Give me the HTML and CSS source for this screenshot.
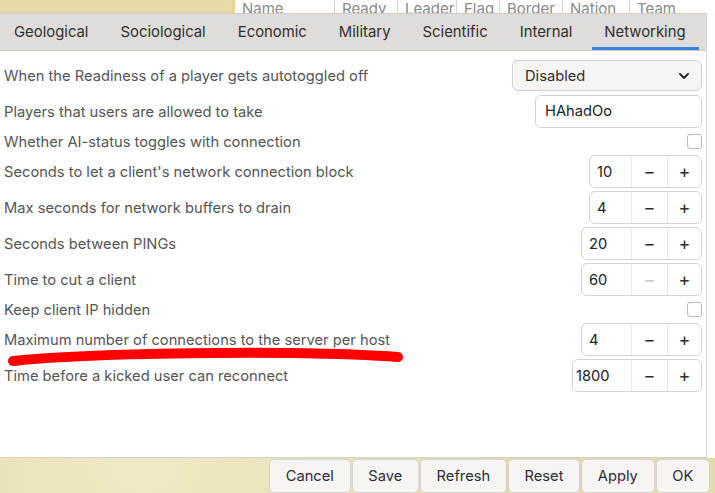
FILE: index.html
```html
<!DOCTYPE html>
<html lang="en">
<head>
    <meta charset="UTF-8">
    <title>Server settings - Networking</title>
    <link rel="stylesheet" href="styles.css">
</head>
<body>
    <div class="topstrip">
        <div class="map-edge"></div>
        <div class="players-head">
            <span class="col col-name">Name</span>
            <span class="col col-ready">Ready</span>
            <span class="col col-leader">Leader</span>
            <span class="col col-flag">Flag</span>
            <span class="col col-border">Border</span>
            <span class="col col-nation">Nation</span>
            <span class="col col-team">Team</span>
        </div>
    </div>

    <div class="main">
        <div class="dialog">
            <div class="tabs">
                <div class="tab">Geological</div>
                <div class="tab">Sociological</div>
                <div class="tab">Economic</div>
                <div class="tab">Military</div>
                <div class="tab">Scientific</div>
                <div class="tab">Internal</div>
                <div class="tab active">Networking</div>
            </div>

            <div class="page">
                <div class="row">
                    <span class="label">When the Readiness of a player gets autotoggled off</span>
                    <div class="dropdown">
                        <span>Disabled</span>
                        <svg class="chevron" width="12" height="8" viewBox="0 0 12 8"><path d="M2 2 L6 6 L10 2" fill="none" stroke="#2e2e2e" stroke-width="2" stroke-linecap="round" stroke-linejoin="round"/></svg>
                    </div>
                </div>
                <div class="row">
                    <span class="label">Players that users are allowed to take</span>
                    <div class="entry">HAhadOo</div>
                </div>
                <div class="row small">
                    <span class="label">Whether AI-status toggles with connection</span>
                    <span class="check"></span>
                </div>
                <div class="row">
                    <span class="label">Seconds to let a client's network connection block</span>
                    <div class="spin">
                        <span class="value w42">10</span>
                        <span class="step">&minus;</span>
                        <span class="step">+</span>
                    </div>
                </div>
                <div class="row">
                    <span class="label">Max seconds for network buffers to drain</span>
                    <div class="spin">
                        <span class="value w42">4</span>
                        <span class="step">&minus;</span>
                        <span class="step">+</span>
                    </div>
                </div>
                <div class="row">
                    <span class="label">Seconds between PINGs</span>
                    <div class="spin">
                        <span class="value w50">20</span>
                        <span class="step">&minus;</span>
                        <span class="step">+</span>
                    </div>
                </div>
                <div class="row">
                    <span class="label">Time to cut a client</span>
                    <div class="spin">
                        <span class="value w50">60</span>
                        <span class="step disabled">&minus;</span>
                        <span class="step">+</span>
                    </div>
                </div>
                <div class="row small">
                    <span class="label">Keep client IP hidden</span>
                    <span class="check"></span>
                </div>
                <div class="row">
                    <span class="label">Maximum number of connections to the server per host</span>
                    <div class="spin">
                        <span class="value w50">4</span>
                        <span class="step">&minus;</span>
                        <span class="step">+</span>
                    </div>
                </div>
                <div class="row">
                    <span class="label">Time before a kicked user can reconnect</span>
                    <div class="spin">
                        <span class="value w59">1800</span>
                        <span class="step">&minus;</span>
                        <span class="step">+</span>
                    </div>
                </div>
            </div>
        </div>
        <div class="behind"></div>
    </div>

    <div class="footer">
        <button class="btn">Cancel</button>
        <button class="btn">Save</button>
        <button class="btn">Refresh</button>
        <button class="btn">Reset</button>
        <button class="btn">Apply</button>
        <button class="btn">OK</button>
    </div>

    <!-- red marker stroke drawn over the screenshot -->
    <svg class="scribble" width="420" height="30" viewBox="0 0 420 30">
        <path d="M13 20 C70 14 180 11 290 12 C350 13 385 15 398 16" fill="none" stroke="#ff0000" stroke-width="10" stroke-linecap="round"/>
    </svg>
</body>
</html>
```

FILE: styles.css
```css
body {
    margin: 0;
    width: 715px;
    height: 493px;
    overflow: hidden;
    position: relative;
    font-family: 'Inter', 'Noto Sans', sans-serif;
    background:
        radial-gradient(ellipse at 20% 95%, #efe9c6 0, rgba(239, 233, 198, 0) 45%),
        radial-gradient(ellipse at 70% 10%, #ede6c0 0, rgba(237, 230, 192, 0) 40%),
        #e4dba8;
}

/* players table peeking out behind the dialog */
.topstrip {
    display: flex;
    height: 13px;
}

.map-edge {
    width: 232px;
    border-right: 3px solid #e8d78a;
}

.players-head {
    flex: 1;
    display: flex;
    background: #fff;
    overflow: hidden;
}

.col {
    padding-left: 7px;
    font-size: 15px;
    line-height: 18px;
    color: #8a8a8a;
    border-right: 1px solid #d6d6d6;
    box-sizing: border-box;
    white-space: nowrap;
    overflow: hidden;
}

.col-name { width: 100px; }
.col-ready { width: 63px; }
.col-leader { width: 59px; }
.col-flag { width: 43px; }
.col-border { width: 63px; }
.col-nation { width: 67px; }
.col-team { flex: 1; border-right: none; }

.main {
    display: flex;
    height: 445px;
}

.dialog {
    width: 707px;
    display: flex;
    flex-direction: column;
    background: #fff;
    border-top: 1px solid #cfcbc6;
    border-right: 1px solid #d8d4cf;
    border-bottom: 1px solid #d2cec9;
    box-sizing: border-box;
}

.behind {
    flex: 1;
    background: #fdfdfc;
}

.tabs {
    display: flex;
    height: 36px;
    background: #dfdcd9;
    border-bottom: 1px solid #cdc9c4;
}

.tab {
    position: relative;
    padding: 0 16px;
    line-height: 36px;
    font-size: 14.87px;
    color: #303030;
}

.tab:first-child {
    padding-left: 14px;
}

.tab.active::after {
    content: "";
    position: absolute;
    left: 4px;
    right: 3px;
    bottom: 0;
    height: 3px;
    background: #3584e4;
}

.page {
    flex: 1;
    padding: 8px 4px 0 4px;
    display: flex;
    flex-direction: column;
    gap: 3px;
}

.row {
    display: flex;
    align-items: center;
    justify-content: space-between;
    height: 33px;
}

.row.small {
    height: 21px;
}

.label {
    font-size: 14.7px;
    color: #555;
}

.dropdown {
    width: 190px;
    height: 31px;
    box-sizing: border-box;
    display: flex;
    align-items: center;
    justify-content: space-between;
    padding: 0 11px 0 12px;
    background: #f6f5f4;
    border: 1px solid #d3cfca;
    border-radius: 6px;
    font-size: 14.7px;
    color: #2e2e2e;
}

.entry {
    width: 167px;
    height: 33px;
    box-sizing: border-box;
    padding: 0 9px;
    line-height: 31px;
    border: 1px solid #d6d2cd;
    border-radius: 6px;
    font-size: 14.7px;
    color: #222;
}

.check {
    width: 15px;
    height: 15px;
    box-sizing: border-box;
    border: 1px solid #bdb9b4;
    border-radius: 3px;
    background: #fff;
}

.spin {
    display: flex;
    height: 33px;
    box-sizing: border-box;
    border: 1px solid #d6d2cd;
    border-radius: 6px;
    font-size: 14.7px;
    color: #222;
}

.value {
    line-height: 32px;
    padding-left: 7px;
    box-sizing: border-box;
}

.w42 { width: 41px; }
.w50 { width: 49px; }
.w59 { width: 58px; padding-left: 3px; }

.step {
    width: 35px;
    line-height: 31px;
    text-align: center;
    border-left: 1px solid #ebe9e6;
    font-size: 18px;
    color: #2e2e2e;
}

.step:last-child {
    width: 33px;
}

.step.disabled {
    color: #c8c8c8;
}

.footer {
    display: flex;
    justify-content: flex-end;
    gap: 1px;
    padding: 1px 5px 0 0;
}

.btn {
    height: 34px;
    padding: 0 15.7px;
    font-family: inherit;
    font-size: 14.7px;
    color: #2e2e2e;
    background: #f6f5f4;
    border: 1px solid #d6d2cc;
    border-radius: 5px;
}

.scribble {
    position: absolute;
    left: 0;
    top: 341px;
}
```
